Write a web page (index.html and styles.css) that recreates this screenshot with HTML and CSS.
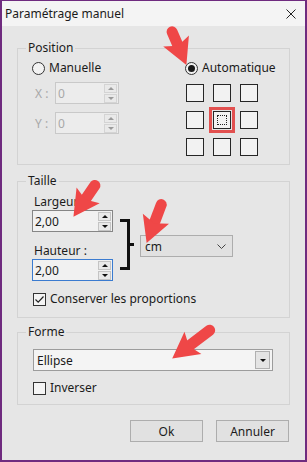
FILE: index.html
```html
<!DOCTYPE html>
<html lang="fr">
<head>
    <meta charset="UTF-8">
    <meta name="viewport" content="width=device-width, initial-scale=1.0">
    <link rel="stylesheet" href="styles.css">
    <title>Paramétrage manuel</title>
</head>
<body>
    <div class="window">
        <div class="titlebar">
            <span class="title">Paramétrage manuel</span>
            <svg class="close" width="10" height="10" viewBox="0 0 10 10">
                <path d="M0.5 0.5 L9.5 9.5 M9.5 0.5 L0.5 9.5" stroke="#222" stroke-width="1" fill="none"/>
            </svg>
        </div>
        <div class="content">
            <fieldset class="group">
                <legend>Position</legend>
                <div class="pos-body">
                    <div class="pos-manual">
                        <label class="radio"><span class="radio-mark"></span>Manuelle</label>
                        <div class="coord">
                            <span class="coord-label">X :</span>
                            <div class="spin disabled">
                                <span class="spin-value">0</span>
                                <span class="spin-btns"><span class="spin-btn up"></span><span class="spin-btn down"></span></span>
                            </div>
                        </div>
                        <div class="coord coord-y">
                            <span class="coord-label">Y :</span>
                            <div class="spin disabled">
                                <span class="spin-value">0</span>
                                <span class="spin-btns"><span class="spin-btn up"></span><span class="spin-btn down"></span></span>
                            </div>
                        </div>
                    </div>
                    <div class="pos-auto">
                        <label class="radio"><span class="radio-mark checked"></span>Automatique</label>
                        <div class="anchor-grid">
                            <span class="cell"></span>
                            <span class="cell"></span>
                            <span class="cell"></span>
                            <span class="cell"></span>
                            <span class="cell selected"><span class="focus"></span></span>
                            <span class="cell"></span>
                            <span class="cell"></span>
                            <span class="cell"></span>
                            <span class="cell"></span>
                        </div>
                    </div>
                </div>
            </fieldset>

            <fieldset class="group group-size">
                <legend>Taille</legend>
                <div class="size-body">
                    <div class="size-row">
                        <div class="size-fields">
                            <div class="field-label">Largeur</div>
                            <div class="spin enabled">
                                <span class="spin-value">2,00</span>
                                <span class="spin-btns"><span class="spin-btn up"></span><span class="spin-btn down"></span></span>
                            </div>
                            <div class="field-label label-height">Hauteur :</div>
                            <div class="spin enabled focused">
                                <span class="spin-value">2,00</span>
                                <span class="spin-btns"><span class="spin-btn up"></span><span class="spin-btn down"></span></span>
                            </div>
                        </div>
                        <svg class="bracket" width="14" height="51" viewBox="0 0 14 51">
                            <path d="M0 1.5 H8.5 V49.5 H0 M8.5 25.5 H14" stroke="#111" stroke-width="3" fill="none"/>
                        </svg>
                        <div class="unit-select">
                            <span>cm</span>
                            <svg width="9" height="5" viewBox="0 0 9 5">
                                <path d="M0.5 0.5 L4.5 4.5 L8.5 0.5" stroke="#444" stroke-width="1" fill="none"/>
                            </svg>
                        </div>
                    </div>
                    <label class="check check-ratio">
                        <span class="check-box">
                            <svg width="11" height="11" viewBox="0 0 11 11">
                                <path d="M1.5 5.5 L4.2 8.2 L9.5 2.5" stroke="#222" stroke-width="1.2" fill="none"/>
                            </svg>
                        </span>Conserver les proportions
                    </label>
                </div>
            </fieldset>

            <fieldset class="group group-shape">
                <legend>Forme</legend>
                <div class="shape-body">
                    <div class="shape-select">
                        <span class="shape-value">Ellipse</span>
                        <span class="shape-btn"></span>
                    </div>
                    <label class="check check-invert"><span class="check-box"></span>Inverser</label>
                </div>
            </fieldset>

            <div class="actions">
                <button>Ok</button>
                <button>Annuler</button>
            </div>
        </div>
    </div>

    <svg class="arrows" width="307" height="462" viewBox="0 0 307 462">
        <g fill="#ef4747" stroke="#ef4747">
            <g transform="translate(186 64) rotate(66.6)">
                <line x1="-35" y1="0" x2="-14" y2="0" stroke-width="11" stroke-linecap="round"/>
                <polygon points="1,0 -25,-14 -20,0 -25,14" stroke="none"/>
            </g>
            <g transform="translate(74 216) rotate(124.4)">
                <line x1="-37" y1="0" x2="-14" y2="0" stroke-width="11" stroke-linecap="round"/>
                <polygon points="1,0 -25,-14 -20,0 -25,14" stroke="none"/>
            </g>
            <g transform="translate(147 242) rotate(110.9)">
                <line x1="-40" y1="0" x2="-14" y2="0" stroke-width="11" stroke-linecap="round"/>
                <polygon points="1,0 -25,-14 -20,0 -25,14" stroke="none"/>
            </g>
            <g transform="translate(173 358) rotate(142.9)">
                <line x1="-46" y1="0" x2="-14" y2="0" stroke-width="11" stroke-linecap="round"/>
                <polygon points="1,0 -25,-14 -20,0 -25,14" stroke="none"/>
            </g>
        </g>
    </svg>
</body>
</html>
```

FILE: styles.css
```css
body {
    margin: 0;
    position: relative;
    font-family: "Noto Sans", "Open Sans", sans-serif;
    font-size: 12px;
    color: #1b1b1b;
}

.window {
    width: 307px;
    height: 462px;
    box-sizing: border-box;
    border: 2px solid #6f2b7f;
    border-top-width: 1px;
    background: #e6e6e6;
    display: flex;
    flex-direction: column;
}

.titlebar {
    height: 25px;
    flex: none;
    background: #f4f4f4;
    display: flex;
    align-items: center;
    justify-content: space-between;
    padding: 0 9px 0 3px;
}

.content {
    padding: 14px 15px 0 15px;
}

/* group boxes */
.group {
    margin: 0;
    padding: 0;
    min-width: 0;
    border: 1px solid #d3d3d3;
}

.group legend {
    margin-left: 8px;
    padding: 0 2px;
    line-height: 16px;
}

.group-size {
    margin-top: 8px;
}

.group-shape {
    margin-top: 6px;
}

/* position */
.pos-body {
    display: grid;
    grid-template-columns: 153px 1fr;
    padding: 4px 0 8px 14px;
}

.radio {
    display: flex;
    align-items: center;
    height: 16px;
    line-height: 16px;
}

.radio-mark {
    width: 13px;
    height: 13px;
    box-sizing: border-box;
    border: 1px solid #333;
    border-radius: 50%;
    margin-right: 4px;
    background: #f2f2f2;
    display: flex;
    align-items: center;
    justify-content: center;
}

.radio-mark.checked::before {
    content: "";
    width: 7px;
    height: 7px;
    border-radius: 50%;
    background: #1a1a1a;
}

.coord {
    display: flex;
    align-items: center;
    margin-top: 6px;
    padding-left: 3px;
}

.coord-y {
    margin-top: 8px;
}

.coord-label {
    width: 20px;
    color: #a8a8a8;
}

.spin {
    width: 64px;
    height: 22px;
    box-sizing: border-box;
    display: flex;
    align-items: center;
    padding-left: 2px;
    border: 1px solid #c9c9c9;
    background: #ececec;
}

.spin.disabled {
    color: #a8a8a8;
}

.spin.enabled {
    width: 81px;
    border-color: #868686;
    background: #f1f1f1;
}

.spin.focused {
    border-color: #3a7bd0;
}

.spin-value {
    flex: 1;
}

.spin-btns {
    display: flex;
    flex-direction: column;
    gap: 1px;
    margin-right: 1px;
}

.spin-btn {
    width: 13px;
    height: 9px;
    box-sizing: border-box;
    border: 1px solid #c4c4c4;
    background: #e9e9e9;
    display: flex;
    align-items: center;
    justify-content: center;
}

.spin-btn.up::before {
    content: "";
    border-left: 3px solid transparent;
    border-right: 3px solid transparent;
    border-bottom: 3px solid #111;
}

.spin-btn.down::before {
    content: "";
    border-left: 3px solid transparent;
    border-right: 3px solid transparent;
    border-top: 3px solid #111;
}

.disabled .spin-btn {
    border-color: #d4d4d4;
}

.disabled .spin-btn.up::before {
    border-bottom-color: #9a9a9a;
}

.disabled .spin-btn.down::before {
    border-top-color: #9a9a9a;
}

.anchor-grid {
    display: grid;
    grid-template-columns: repeat(3, 18px);
    grid-auto-rows: 18px;
    gap: 9px;
    margin-top: 8px;
    margin-left: 1px;
}

.cell {
    box-sizing: border-box;
    border: 1px solid #262626;
    background: #f2f2f2;
    display: flex;
    align-items: center;
    justify-content: center;
}

.cell.selected {
    box-shadow: 0 0 0 1px #e4e4e4, 0 0 0 4px #e2504f;
}

.focus {
    width: 10px;
    height: 10px;
    box-sizing: border-box;
    border: 1px dotted #222;
}

/* size */
.size-body {
    padding: 5px 0 10px 14px;
}

.size-row {
    display: flex;
    align-items: flex-start;
}

.size-fields {
    width: 81px;
}

.field-label {
    line-height: 16px;
    padding-left: 2px;
}

.label-height {
    margin-top: 11px;
}

.bracket {
    margin: 25px 0 0 7px;
}

.unit-select {
    width: 93px;
    height: 22px;
    box-sizing: border-box;
    margin: 41px 0 0 6px;
    border: 1px solid #adadad;
    background: #e1e1e1;
    display: flex;
    align-items: center;
    justify-content: space-between;
    padding: 0 6px 0 4px;
}

.check {
    display: flex;
    align-items: center;
    height: 16px;
    line-height: 16px;
}

.check-ratio {
    margin: 10px 0 0 1px;
}

.check-box {
    width: 13px;
    height: 13px;
    box-sizing: border-box;
    border: 1px solid #333;
    background: #f4f4f4;
    margin-right: 4px;
    display: flex;
    align-items: center;
    justify-content: center;
}

/* shape */
.shape-body {
    padding: 9px 0 8px 15px;
}

.shape-select {
    width: 240px;
    height: 22px;
    box-sizing: border-box;
    border: 1px solid #9c9c9c;
    background: #f4f4f4;
    display: flex;
    align-items: center;
    padding-left: 3px;
}

.shape-value {
    flex: 1;
}

.shape-btn {
    width: 15px;
    height: 18px;
    box-sizing: border-box;
    margin-right: 2px;
    border: 1px solid #b0b0b0;
    background: #e4e4e4;
    display: flex;
    align-items: center;
    justify-content: center;
}

.shape-btn::before {
    content: "";
    border-left: 3px solid transparent;
    border-right: 3px solid transparent;
    border-top: 3px solid #111;
}

.check-invert {
    margin-top: 9px;
}

/* buttons */
.actions {
    display: flex;
    justify-content: flex-end;
    gap: 13px;
    margin-top: 15px;
    padding-right: 1px;
}

.actions button {
    width: 73px;
    height: 22px;
    border: 1px solid #adadad;
    background: #e1e1e1;
    font-family: inherit;
    font-size: 12px;
    color: #1b1b1b;
    padding: 0;
}

.arrows {
    position: absolute;
    left: 0;
    top: 0;
    pointer-events: none;
}
```
